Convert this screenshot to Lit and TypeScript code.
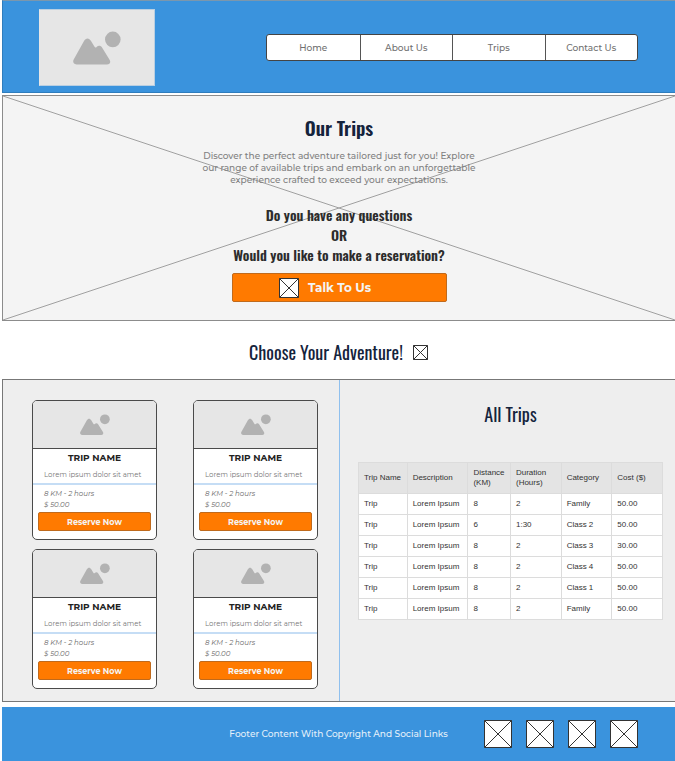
import { LitElement, html, css } from "lit";
import { customElement, property } from "lit/decorators.js";

interface TripRow {
  name: string;
  description: string;
  distance: string;
  duration: string;
  category: string;
  cost: string;
}

const NAV_ITEMS = ["Home", "About Us", "Trips", "Contact Us"];

const CARDS = [1, 2, 3, 4];

const trip = (distance: string, duration: string, category: string, cost: string): TripRow => ({
  name: "Trip",
  description: "Lorem Ipsum",
  distance,
  duration,
  category,
  cost,
});

const TRIPS: TripRow[] = [
  trip("8", "2", "Family", "50.00"),
  trip("6", "1:30", "Class 2", "50.00"),
  trip("8", "2", "Class 3", "30.00"),
  trip("8", "2", "Class 4", "50.00"),
  trip("8", "2", "Class 1", "50.00"),
  trip("8", "2", "Family", "50.00"),
];

/* Mountains-and-sun picture placeholder. */
@customElement("picture-mark")
export class PictureMark extends LitElement {
  static styles = css`
    :host {
      display: block;
    }
    .mark {
      display: block;
      width: 100%;
      fill: #b2b2b2;
    }
  `;

  render() {
    return html`
      <svg class="mark" viewBox="0 0 48 34" aria-hidden="true">
        <path
          d="M3.5 33.4 C0.6 33.4 -0.6 30.8 0.7 28.4 L11 10 C12.8 6.6 16.2 6.6 18 10 L21.4 15.6 C22 16.7 22.8 16.9 23.6 16 C25.3 14.2 27.8 14.4 29.2 16.8 L36.7 28.9 C38 31.3 36.8 33.4 34 33.4 Z"
        />
        <circle cx="39.8" cy="8.4" r="7.8" />
      </svg>
    `;
  }
}

/* Crossed box that stands for an icon. */
@customElement("cross-box")
export class CrossBox extends LitElement {
  static styles = css`
    :host {
      display: block;
    }
    .box {
      display: block;
      width: 100%;
    }
    .shape {
      fill: #fff;
      stroke: #333;
      stroke-width: 1px;
      vector-effect: non-scaling-stroke;
    }
  `;

  @property({ type: Number }) size = 28;

  render() {
    const end = this.size - 0.5;
    return html`
      <svg class="box" viewBox="0 0 ${this.size} ${this.size}" aria-hidden="true">
        <path class="shape" d="M0.5 0.5H${end}V${end}H0.5ZL${end} ${end}M${end} 0.5L0.5 ${end}" />
      </svg>
    `;
  }
}

@customElement("trip-card")
export class TripCard extends LitElement {
  static styles = css`
    :host {
      display: block;
      min-width: 0;
    }
    .card {
      background: #fff;
      border: 1px solid #4a4a4a;
      border-radius: 5px;
      overflow: hidden;
      padding-bottom: 8px;
      font-family: Montserrat, Inter, "Open Sans", sans-serif;
      color: #777;
    }
    .photo {
      height: 47px;
      background: #e6e6e6;
      border-bottom: 1px solid #4a4a4a;
      display: flex;
      align-items: center;
      justify-content: center;
    }
    .mark {
      width: 30px;
    }
    .name {
      margin: 0;
      font-size: 9px;
      line-height: 18px;
      font-weight: 700;
      text-align: center;
      color: #222;
    }
    .text {
      margin: 0;
      padding: 0 0 1px 11px;
      font-size: 7px;
      line-height: 15px;
      white-space: nowrap;
      border-bottom: 2px solid #c5ddf5;
    }
    .facts {
      margin: 0;
      padding: 3px 0 2px 11px;
      font-size: 7px;
      line-height: 11px;
      font-style: italic;
      color: #666;
    }
    .reserve {
      display: block;
      width: calc(100% - 10px);
      height: 19px;
      margin: 0 5px;
      padding: 0;
      border: 1px solid #c06a1c;
      border-radius: 2px;
      background: #ff7a00;
      color: #f4f4f4;
      font-family: inherit;
      font-size: 8px;
      font-weight: 700;
      line-height: 16px;
    }
  `;

  render() {
    return html`
      <article class="card">
        <div class="photo"><picture-mark class="mark"></picture-mark></div>
        <h3 class="name">TRIP NAME</h3>
        <p class="text">Lorem ipsum dolor sit amet</p>
        <p class="facts">8 KM - 2 hours<br />$ 50.00</p>
        <button class="reserve" type="button">Reserve Now</button>
      </article>
    `;
  }
}

@customElement("app-root")
export class AppRoot extends LitElement {
  static styles = css`
    :host {
      display: block;
      padding-left: 2px;
      background: #fff;
      font-family: Montserrat, Inter, "Open Sans", sans-serif;
      color: #666;
    }
    .header {
      display: flex;
      align-items: center;
      justify-content: space-between;
      gap: 24px;
      padding: 8px 37px 6px 36px;
      background: #3a93dd;
      border: 1px solid #2f7dbd;
      border-top-color: #7b97ad;
      border-right: 0;
      box-sizing: border-box;
    }
    .logo {
      width: 116px;
      height: 77px;
      box-sizing: border-box;
      border: 1px solid #b9cfe2;
      border-left-color: #e6e6e6;
      background: #e6e6e6;
      display: flex;
      align-items: center;
      justify-content: center;
    }
    .logo-mark {
      width: 48px;
    }
    .nav {
      flex: 0 1 372px;
      display: grid;
      grid-template-columns: repeat(4, 1fr);
      box-sizing: border-box;
      background: #fff;
      border: 1px solid #444;
      border-radius: 3px;
      overflow: hidden;
    }
    .nav-link {
      text-align: center;
      font-size: 9px;
      font-weight: 500;
      line-height: 25px;
      color: #707070;
      text-decoration: none;
    }
    .nav-link + .nav-link {
      border-left: 1px solid #555;
    }
    .hero {
      position: relative;
      margin-top: 2px;
      padding: 16px 0 18px;
      border: 1px solid #8c8c8c;
      border-right: 0;
      background: #f4f4f4;
      display: flex;
      flex-direction: column;
      align-items: center;
      text-align: center;
    }
    .cross {
      position: absolute;
      inset: 0;
      width: 100%;
      height: 100%;
    }
    .cross-line {
      fill: none;
      stroke: #a0a0a0;
      stroke-width: 1px;
      vector-effect: non-scaling-stroke;
    }
    .hero-title,
    .hero-text,
    .hero-ask,
    .talk {
      position: relative;
    }
    .hero-title,
    .hero-ask,
    .section-title,
    .table-title {
      margin: 0;
      font-family: Oswald, "Liberation Sans Narrow", "Roboto Condensed", "Liberation Sans", sans-serif;
    }
    .hero-title {
      font-size: 19px;
      line-height: 30px;
      font-weight: 600;
      color: #14233c;
    }
    .hero-text {
      margin: 8px 0 19px;
      font-size: 9px;
      font-weight: 500;
      line-height: 12px;
      color: #808080;
    }
    .hero-ask {
      font-size: 14px;
      line-height: 20px;
      font-weight: 600;
      color: #2c2c2c;
    }
    .talk {
      display: flex;
      align-items: center;
      justify-content: center;
      gap: 9px;
      width: 215px;
      height: 29px;
      margin-top: 8px;
      padding: 0 28px 0 0;
      border: 1px solid #c06a1c;
      border-radius: 2px;
      background: #ff7a00;
      color: #f4f4f4;
      font-family: inherit;
      font-size: 12px;
      font-weight: 700;
    }
    .talk-icon {
      width: 20px;
    }
    .section-head {
      display: flex;
      align-items: center;
      justify-content: center;
      gap: 10px;
      padding: 16px 0 12px;
    }
    .section-title,
    .table-title {
      font-size: 18px;
      line-height: 30px;
      font-weight: 400;
      color: #14233c;
    }
    .section-icon {
      width: 15px;
    }
    .main {
      display: grid;
      grid-template-columns: 1fr 1fr;
      border: 1px solid #777;
      border-right: 0;
      background: #eee;
    }
    .cards {
      display: grid;
      grid-template-columns: 125px 125px;
      align-content: start;
      gap: 9px 36px;
      padding: 20px 0 12px 29px;
    }
    .listing {
      border-left: 1px solid #8fc0ee;
      padding: 19px 12px 0 18px;
    }
    .table-title {
      text-align: center;
    }
    .table {
      width: 100%;
      margin-top: 33px;
      table-layout: fixed;
      border-collapse: collapse;
      font-family: "Liberation Sans", Arial, sans-serif;
      font-size: 8px;
      line-height: 10px;
      color: #333;
    }
    .cell {
      box-sizing: border-box;
      height: 21px;
      padding: 0 0 0 5px;
      border: 1px solid #dcdcdc;
      background: #fff;
      text-align: left;
      font-weight: 400;
      white-space: nowrap;
    }
    .cell.head {
      height: 31px;
      background: #e4e4e4;
      white-space: normal;
    }
    .c-name {
      width: 16%;
    }
    .c-description {
      width: 20%;
    }
    .c-distance {
      width: 14%;
    }
    .footer {
      display: grid;
      grid-template-columns: 1fr auto 1fr;
      align-items: center;
      margin-top: 5px;
      padding: 13px 0;
      background: #3a93dd;
    }
    .footer-text {
      grid-column: 2;
      margin: 0;
      font-size: 9px;
      font-weight: 500;
      line-height: 12px;
      color: #e4f0fa;
    }
    .social {
      display: flex;
      justify-content: flex-end;
      gap: 14px;
      padding-right: 37px;
    }
    .social-link {
      display: block;
      width: 28px;
    }
  `;

  render() {
    return html`
      <header class="header">
        <div class="logo"><picture-mark class="logo-mark"></picture-mark></div>
        <nav class="nav">
          ${NAV_ITEMS.map((item) => html`<a class="nav-link" href="#">${item}</a>`)}
        </nav>
      </header>

      <section class="hero">
        <svg class="cross" viewBox="0 0 100 100" preserveAspectRatio="none" aria-hidden="true">
          <path class="cross-line" d="M0 0L100 100M100 0L0 100" />
        </svg>
        <h1 class="hero-title">Our Trips</h1>
        <p class="hero-text">
          Discover the perfect adventure tailored just for you! Explore<br />
          our range of available trips and embark on an unforgettable<br />
          experience crafted to exceed your expectations.
        </p>
        <h2 class="hero-ask">
          Do you have any questions<br />OR<br />Would you like to make a reservation?
        </h2>
        <button class="talk" type="button">
          <cross-box class="talk-icon" .size=${20}></cross-box>
          Talk To Us
        </button>
      </section>

      <div class="section-head">
        <h2 class="section-title">Choose Your Adventure!</h2>
        <cross-box class="section-icon" .size=${15}></cross-box>
      </div>

      <main class="main">
        <section class="cards">${CARDS.map(() => html`<trip-card></trip-card>`)}</section>
        <section class="listing">
          <h2 class="table-title">All Trips</h2>
          <table class="table">
            <thead>
              <tr>
                <th class="cell head c-name" scope="col">Trip Name</th>
                <th class="cell head c-description" scope="col">Description</th>
                <th class="cell head c-distance" scope="col">Distance (KM)</th>
                <th class="cell head" scope="col">Duration (Hours)</th>
                <th class="cell head" scope="col">Category</th>
                <th class="cell head" scope="col">Cost ($)</th>
              </tr>
            </thead>
            <tbody>
              ${TRIPS.map(
                (row) => html`
                  <tr>
                    <td class="cell">${row.name}</td>
                    <td class="cell">${row.description}</td>
                    <td class="cell">${row.distance}</td>
                    <td class="cell">${row.duration}</td>
                    <td class="cell">${row.category}</td>
                    <td class="cell">${row.cost}</td>
                  </tr>
                `
              )}
            </tbody>
          </table>
        </section>
      </main>

      <footer class="footer">
        <p class="footer-text">Footer Content With Copyright And Social Links</p>
        <div class="social">
          ${[1, 2, 3, 4].map(
            (n) => html`
              <a class="social-link" href="#" aria-label="Social link ${n}">
                <cross-box .size=${28}></cross-box>
              </a>
            `
          )}
        </div>
      </footer>
    `;
  }
}
